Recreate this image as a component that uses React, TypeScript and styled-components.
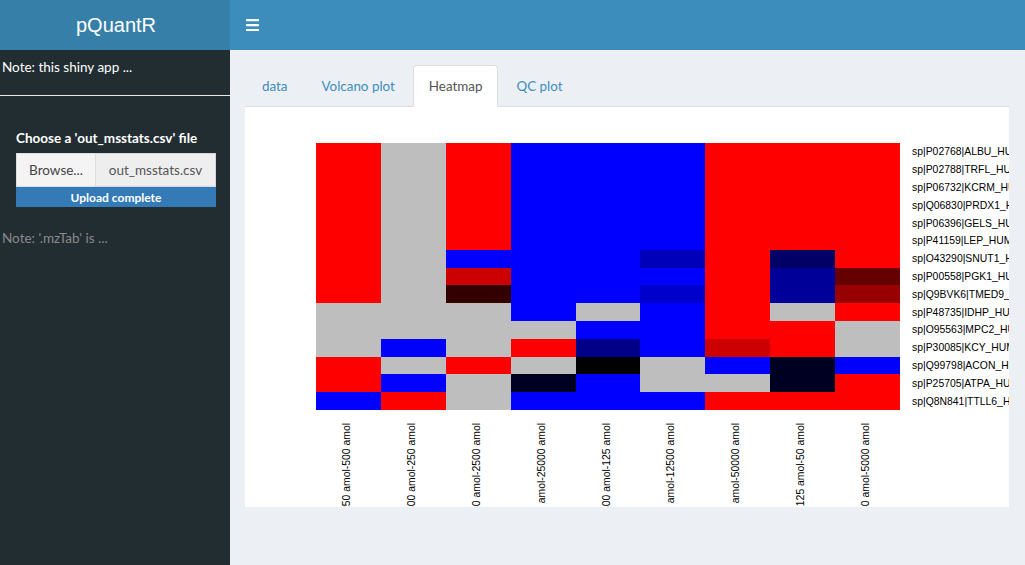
import styled, { createGlobalStyle } from 'styled-components';

const GlobalStyle = createGlobalStyle`
  html, body {
    margin: 0;
    padding: 0;
    overflow: hidden;
    font-family: Lato, 'Open Sans', sans-serif;
  }
  * {
    box-sizing: border-box;
  }
`;

const R = '#ff0000';
const G = '#bebebe';
const B = '#0000ff';

// heatmap values, row by row (15 proteins x 9 comparisons)
const matrix: string[][] = [
  [R, G, R, B, B, B, R, R, R],
  [R, G, R, B, B, B, R, R, R],
  [R, G, R, B, B, B, R, R, R],
  [R, G, R, B, B, B, R, R, R],
  [R, G, R, B, B, B, R, R, R],
  [R, G, R, B, B, B, R, R, R],
  [R, G, B, B, B, '#0000bb', R, '#000066', R],
  [R, G, '#cc0000', B, B, B, R, '#000099', '#660000'],
  [R, G, '#330000', B, B, '#0000cc', R, '#000099', '#990000'],
  [G, G, G, B, G, B, R, G, R],
  [G, G, G, G, B, B, R, R, G],
  [G, B, G, R, '#000088', B, '#cc0000', R, G],
  [R, G, R, G, '#000000', G, B, '#000022', B],
  [R, B, G, '#000022', B, G, G, '#000022', R],
  [B, R, G, B, B, B, R, R, R],
];

const proteins = [
  'sp|P02768|ALBU_HUMAN',
  'sp|P02788|TRFL_HUMAN',
  'sp|P06732|KCRM_HUMAN',
  'sp|Q06830|PRDX1_HUMAN',
  'sp|P06396|GELS_HUMAN',
  'sp|P41159|LEP_HUMAN',
  'sp|O43290|SNUT1_HUMAN',
  'sp|P00558|PGK1_HUMAN',
  'sp|Q9BVK6|TMED9_HUMAN',
  'sp|P48735|IDHP_HUMAN',
  'sp|O95563|MPC2_HUMAN',
  'sp|P30085|KCY_HUMAN',
  'sp|Q99798|ACON_HUMAN',
  'sp|P25705|ATPA_HUMAN',
  'sp|Q8N841|TTLL6_HUMAN',
];

const comparisons = [
  '250 amol-500 amol',
  '500 amol-250 amol',
  '50 amol-2500 amol',
  'amol-25000 amol',
  '500 amol-125 amol',
  'amol-12500 amol',
  'amol-50000 amol',
  '125 amol-50 amol',
  '50 amol-5000 amol',
];

const Page = styled.div`
  width: 1025px;
  height: 565px;
  display: flex;
  flex-direction: column;
`;

const Header = styled.header`
  height: 50px;
  display: flex;
  flex-shrink: 0;
`;

const Logo = styled.div`
  width: 230px;
  background: #367fa9;
  color: #fff;
  font-family: 'Liberation Sans', Arial, sans-serif;
  font-size: 20px;
  display: flex;
  align-items: center;
  justify-content: center;
  padding-left: 2px;
`;

const Navbar = styled.nav`
  flex: 1;
  background: #3c8dbc;
  display: flex;
  align-items: center;
  padding-left: 16px;
`;

const Main = styled.div`
  flex: 1;
  display: flex;
  min-height: 0;
`;

const Sidebar = styled.aside`
  width: 230px;
  background: #222d32;
  color: #fff;
  font-size: 13.5px;
  flex-shrink: 0;
  padding-top: 7px;
`;

const SideNote = styled.div<{ $muted?: boolean }>`
  padding-left: 2px;
  line-height: 20px;
  color: ${p => (p.$muted ? '#8a8a8a' : '#fff')};
`;

const SideRule = styled.hr`
  margin: 18px 0 0 0;
  border: 0;
  border-top: 1px solid #e8e8e8;
`;

const FileGroup = styled.div`
  padding: 32px 14px 0 16px;
  margin-bottom: 21px;

  label {
    display: block;
    font-weight: 700;
    line-height: 20px;
    margin-bottom: 5px;
  }
`;

const InputGroup = styled.div`
  display: flex;
  height: 34px;
`;

const BrowseButton = styled.div`
  width: 80px;
  background: #f4f4f4;
  border: 1px solid #ddd;
  color: #444;
  display: flex;
  align-items: center;
  justify-content: center;
`;

const FileName = styled.div`
  flex: 1;
  background: #eeeeee;
  border: 1px solid #d2d6de;
  border-left: 0;
  color: #555;
  display: flex;
  align-items: center;
  justify-content: center;
`;

const Progress = styled.div`
  height: 20px;
  background: #337ab7;
  color: #fff;
  font-size: 12px;
  font-weight: 700;
  display: flex;
  align-items: center;
  justify-content: center;
`;

const Content = styled.main`
  flex: 1;
  background: #ecf0f5;
  padding: 15px 16px 0 15px;
  display: flex;
  flex-direction: column;
  min-width: 0;
`;

const TabNav = styled.ul`
  list-style: none;
  margin: 0;
  padding: 0 0 0 1px;
  display: flex;
  gap: 2px;
  border-bottom: 1px solid #ddd;
`;

const Tab = styled.li<{ $active?: boolean }>`
  padding: 10px 15px;
  line-height: 20px;
  font-size: 13.4px;
  margin-bottom: -1px;
  border: 1px solid ${p => (p.$active ? '#ddd' : 'transparent')};
  border-bottom-color: transparent;
  border-radius: 4px 4px 0 0;
  background: ${p => (p.$active ? '#fff' : 'transparent')};
  color: ${p => (p.$active ? '#555' : '#3c8dbc')};
`;

const TabPane = styled.section`
  background: #fff;
  height: 400px;
  overflow: hidden;
`;

const Plot = styled.div`
  padding: 36px 0 0 71px;
  display: flex;
  flex-direction: column;
  font-family: 'Liberation Sans', Arial, sans-serif;
  color: #000;
`;

const HeatRow = styled.div`
  display: flex;
  align-items: flex-start;
`;

const HeatGrid = styled.div`
  display: grid;
  grid-template-columns: repeat(9, 64.9px);
  grid-template-rows: repeat(15, 17.8px);
  flex-shrink: 0;
`;

const Cell = styled.div<{ $fill: string }>`
  background: ${p => p.$fill};
`;

const RowLabels = styled.div`
  margin-left: 12px;
  display: grid;
  grid-template-rows: repeat(15, 17.8px);
  font-size: 10.4px;
  white-space: nowrap;
  flex-shrink: 0;

  span {
    display: flex;
    align-items: center;
  }
`;

const ColLabels = styled.div`
  display: flex;
  margin-top: 13px;
`;

const ColLabel = styled.div`
  width: 64.9px;
  flex-shrink: 0;
  display: flex;
  justify-content: center;
  padding-right: 3px;
  align-items: flex-start;

  span {
    writing-mode: vertical-rl;
    transform: rotate(180deg);
    font-size: 10.4px;
    white-space: nowrap;
    line-height: 12px;
  }
`;

const MenuIcon = () => (
  <svg width="13" height="12" viewBox="0 0 13 12">
    <rect x="0" y="0" width="13" height="2.2" rx="0.5" fill="#fff" />
    <rect x="0" y="5" width="13" height="2.2" rx="0.5" fill="#fff" />
    <rect x="0" y="10" width="13" height="2.2" rx="0.5" fill="#fff" />
  </svg>
);

export default function App() {
  return (
    <Page>
      <GlobalStyle />
      <Header>
        <Logo>pQuantR</Logo>
        <Navbar>
          <MenuIcon />
        </Navbar>
      </Header>
      <Main>
        <Sidebar>
          <SideNote>Note: this shiny app ...</SideNote>
          <SideRule />
          <FileGroup>
            <label>Choose a 'out_msstats.csv' file</label>
            <InputGroup>
              <BrowseButton>Browse...</BrowseButton>
              <FileName>out_msstats.csv</FileName>
            </InputGroup>
            <Progress>Upload complete</Progress>
          </FileGroup>
          <SideNote $muted>Note: '.mzTab' is ...</SideNote>
        </Sidebar>
        <Content>
          <TabNav>
            <Tab>data</Tab>
            <Tab>Volcano plot</Tab>
            <Tab $active>Heatmap</Tab>
            <Tab>QC plot</Tab>
          </TabNav>
          <TabPane>
            <Plot>
              <HeatRow>
                <HeatGrid>
                  {matrix.map((row, r) =>
                    row.map((fill, c) => <Cell key={`${r}-${c}`} $fill={fill} />)
                  )}
                </HeatGrid>
                <RowLabels>
                  {proteins.map(p => (
                    <span key={p}>{p}</span>
                  ))}
                </RowLabels>
              </HeatRow>
              <ColLabels>
                {comparisons.map(c => (
                  <ColLabel key={c}>
                    <span>{c}</span>
                  </ColLabel>
                ))}
              </ColLabels>
            </Plot>
          </TabPane>
        </Content>
      </Main>
    </Page>
  );
}
